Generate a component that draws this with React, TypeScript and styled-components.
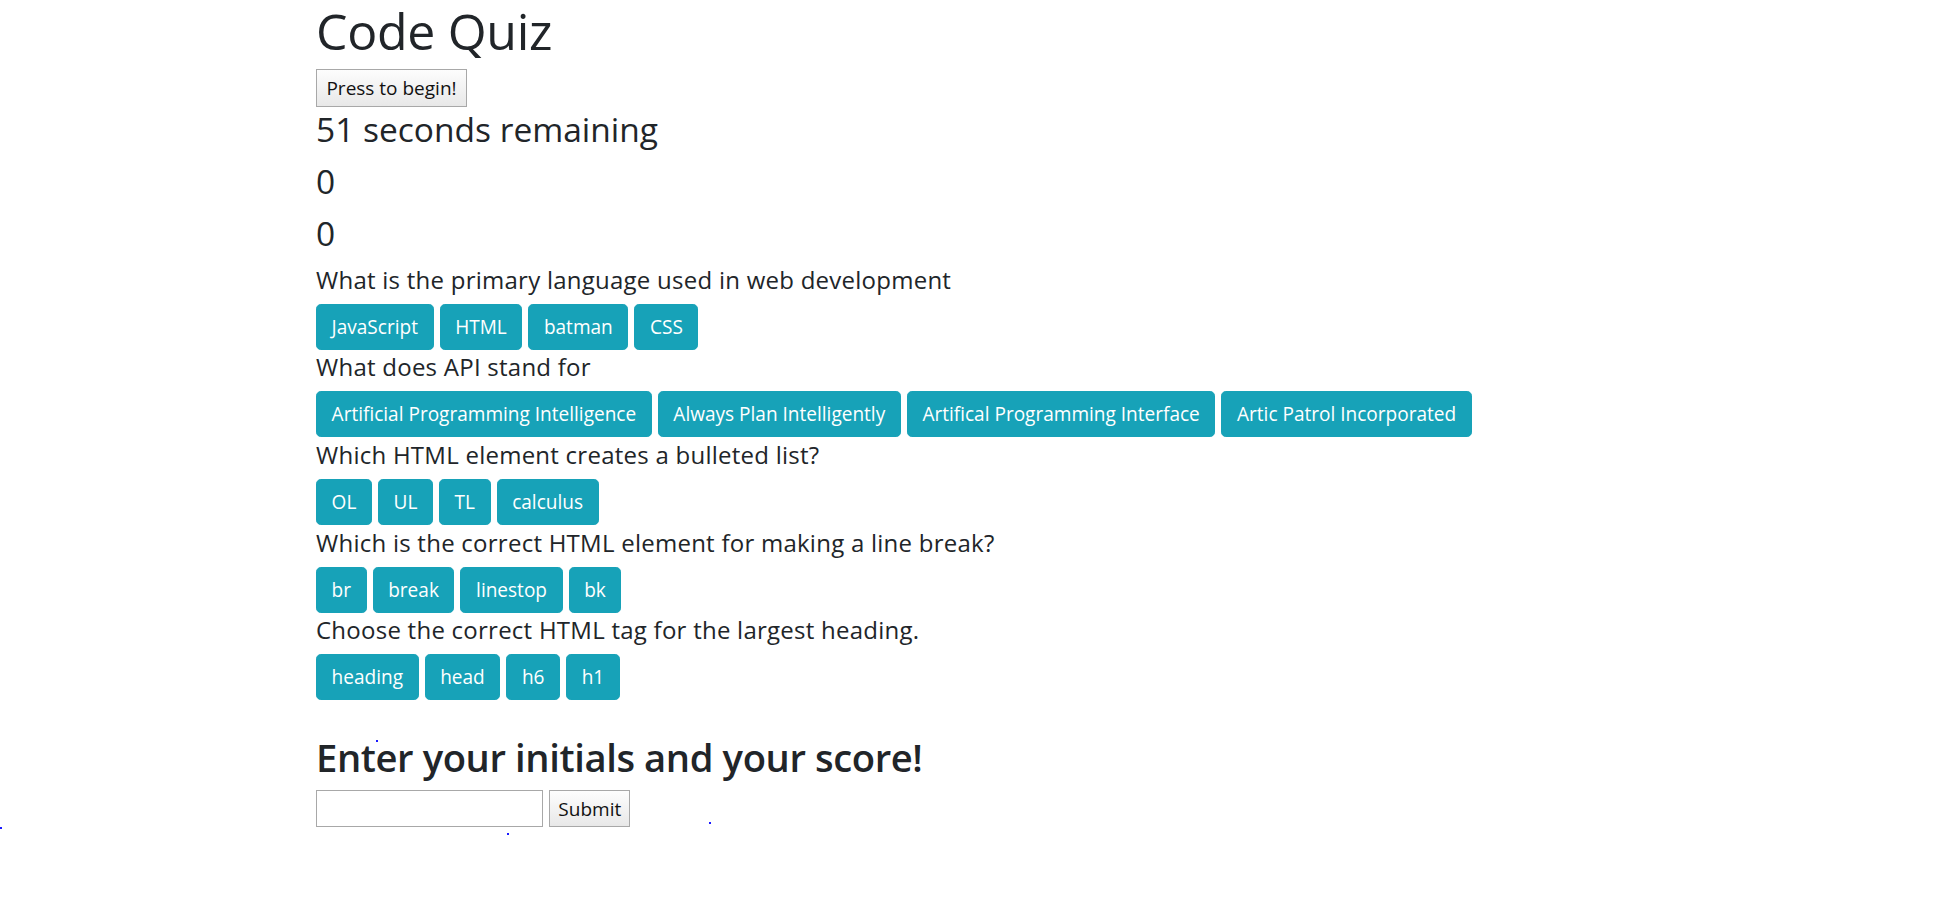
import React from "react";
import styled, { createGlobalStyle } from "styled-components";

const Global = createGlobalStyle`
  html, body { margin: 0; padding: 0; background: #ffffff; }
  body {
    font-family: "Open Sans", "Noto Sans", sans-serif;
    color: #212529;
  }
  * { box-sizing: border-box; }
`;

const Page = styled.main`
  position: relative;
  min-height: 907px;
  padding: 0 0 0 316px;
`;

const Title = styled.h1`
  margin: 0 0 7.3px;
  font-size: 50px;
  font-weight: 400;
  line-height: 62px;
  letter-spacing: -0.3px;
`;

const PlainButton = styled.button<{ $w: number }>`
  display: block;
  width: ${(p) => p.$w}px;
  height: 37.4px;
  padding: 0;
  font-family: "Open Sans", sans-serif;
  font-size: 19px;
  color: #111;
  background: linear-gradient(#fdfdfd, #e8e8e8);
  border: 1px solid #a8a8a8;
  border-radius: 0;
`;

const Stat = styled.h3`
  margin: 1px 0 10.3px;
  font-size: 33.5px;
  font-weight: 500;
  line-height: 42px;
`;

const QuestionBlock = styled.section`
  margin-top: 2.7px;
  &:first-of-type {
    margin-top: 2.2px;
  }
`;

const Question = styled.h5`
  margin: 0 0 10px;
  font-size: 24px;
  font-weight: 500;
  line-height: 29px;
  letter-spacing: 0.25px;
`;

const Options = styled.div`
  display: flex;
  gap: 6px;
`;

const Option = styled.button`
  height: 46px;
  padding: 0 14.6px;
  font-family: "Open Sans", sans-serif;
  font-size: 19.05px;
  color: #ffffff;
  background: #17a2b8;
  border: 1px solid #17a2b8;
  border-radius: 4.8px;
  white-space: nowrap;
`;

const ScoreHeading = styled.h2`
  margin: 32.5px 0 9.1px;
  font-size: 38.2px;
  font-weight: 600;
  line-height: 48px;
  letter-spacing: -0.4px;
`;

const Form = styled.form`
  display: flex;
  gap: 6.6px;
`;

const Initials = styled.input`
  width: 226.7px;
  height: 37.4px;
  border: 1px solid #a8a8a8;
  background: #fff;
  padding: 0 4px;
  font-size: 19px;
`;

const Dot = styled.span<{ $x: number; $y: number }>`
  position: absolute;
  left: ${(p) => p.$x}px;
  top: ${(p) => p.$y}px;
  width: 2px;
  height: 2px;
  background: #1a1aff;
`;

const questions = [
  { q: "What is the primary language used in web development", a: ["JavaScript", "HTML", "batman", "CSS"] },
  {
    q: "What does API stand for",
    a: [
      "Artificial Programming Intelligence",
      "Always Plan Intelligently",
      "Artifical Programming Interface",
      "Artic Patrol Incorporated",
    ],
  },
  { q: "Which HTML element creates a bulleted list?", a: ["OL", "UL", "TL", "calculus"] },
  { q: "Which is the correct HTML element for making a line break?", a: ["br", "break", "linestop", "bk"] },
  { q: "Choose the correct HTML tag for the largest heading.", a: ["heading", "head", "h6", "h1"] },
];

const dots = [
  { x: 0, y: 827 },
  { x: 507, y: 833 },
  { x: 709, y: 822 },
  { x: 376, y: 740 },
];

export default function App() {
  return (
    <>
      <Global />
      <Page>
        <Title>Code Quiz</Title>
        <PlainButton $w={151}>Press to begin!</PlainButton>
        <Stat>51 seconds remaining</Stat>
        <Stat>0</Stat>
        <Stat>0</Stat>
        {questions.map((item) => (
          <QuestionBlock key={item.q}>
            <Question>{item.q}</Question>
            <Options>
              {item.a.map((ans) => (
                <Option key={ans} type="button">
                  {ans}
                </Option>
              ))}
            </Options>
          </QuestionBlock>
        ))}
        <ScoreHeading>Enter your initials and your score!</ScoreHeading>
        <Form onSubmit={(e) => e.preventDefault()}>
          <Initials type="text" />
          <PlainButton $w={81} type="submit">
            Submit
          </PlainButton>
        </Form>
        {dots.map((d, i) => (
          <Dot key={i} $x={d.x} $y={d.y} />
        ))}
      </Page>
    </>
  );
}
